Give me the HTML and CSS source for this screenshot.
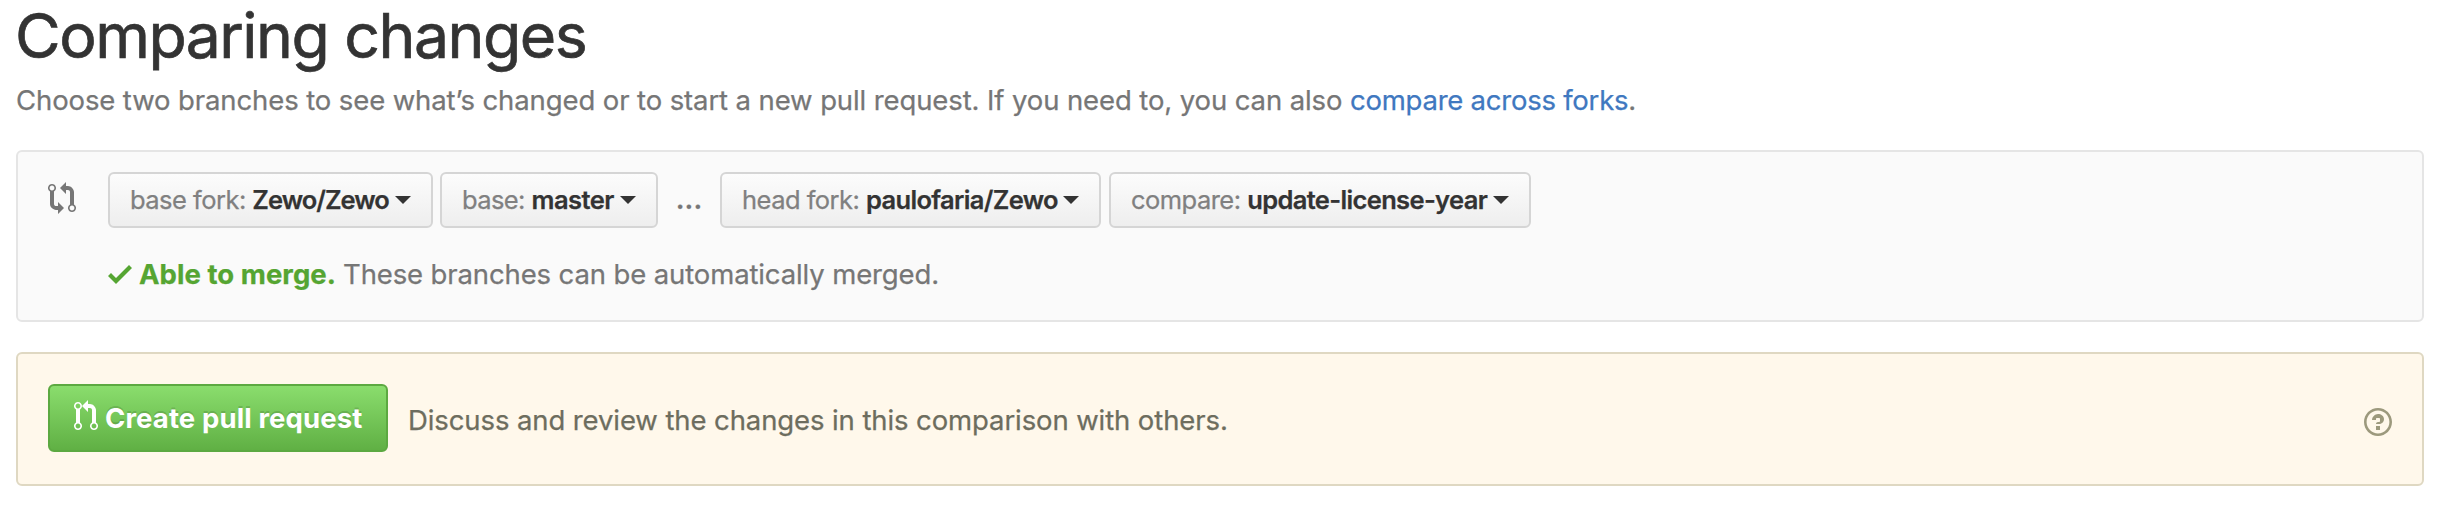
FILE: index.html
```html
<!DOCTYPE html>
<html lang="en">
<head>
<meta charset="utf-8">
<title>Comparing changes</title>
<link rel="stylesheet" href="styles.css">
</head>
<body>
<main class="page">
  <h1 class="title">Comparing changes</h1>
  <p class="subtitle">Choose two branches to see what’s changed or to start a new pull request. If you need to, you can also <a class="link" href="#">compare across forks</a>.</p>

  <section class="range">
    <svg class="icon-compare" viewBox="0 0 14 16" width="28" height="32"><path d="M5 12H4c-.27-.02-.48-.11-.69-.31-.21-.2-.3-.42-.31-.69V4.72A1.993 1.993 0 0 0 2 1a1.993 1.993 0 0 0-1 3.72V11c.03.78.34 1.47.94 2.06.6.59 1.28.91 2.06.94h1v2l3-3-3-3v2zM2 1.8c.66 0 1.2.55 1.2 1.2 0 .65-.55 1.2-1.2 1.2C1.35 4.2.8 3.65.8 3c0-.65.55-1.2 1.2-1.2zm11 9.48V5c-.03-.78-.34-1.47-.94-2.06-.6-.59-1.28-.91-2.06-.94H9V0L6 3l3 3V4h1c.27.02.48.11.69.31.21.2.3.42.31.69v6.28A1.993 1.993 0 0 0 12 15a1.993 1.993 0 0 0 1-3.72zm-1 2.92c-.66 0-1.2-.55-1.2-1.2 0-.65.55-1.2 1.2-1.2.65 0 1.2.55 1.2 1.2 0 .65-.55 1.2-1.2 1.2z"/></svg>
    <div class="range-body">
      <div class="selectors">
        <button class="select base-fork"><span class="label">base fork: </span><strong>Zewo/Zewo</strong><i class="caret"></i></button>
        <button class="select base"><span class="label">base: </span><strong>master</strong><i class="caret"></i></button>
        <span class="dots">...</span>
        <button class="select head-fork"><span class="label">head fork: </span><strong>paulofaria/Zewo</strong><i class="caret"></i></button>
        <button class="select compare"><span class="label">compare: </span><strong>update-license-year</strong><i class="caret"></i></button>
      </div>
      <div class="merge">
        <svg class="icon-check" viewBox="0 0 12 16" width="24" height="32"><path d="M12 5l-8 8-4-4 1.5-1.5L4 10l6.5-6.5z"/></svg>
        <strong class="able">Able to merge.</strong>
        <span class="these">These branches can be automatically merged.</span>
      </div>
    </div>
  </section>

  <section class="prompt">
    <button class="create">
      <svg class="icon-pr" viewBox="0 0 12 16" width="24" height="32"><path d="M11 11.28V5c-.03-.78-.34-1.47-.94-2.06C9.46 2.35 8.78 2.03 8 2H7V0L4 3l3 3V4h1c.27.02.48.11.69.31.21.2.3.42.31.69v6.28A1.993 1.993 0 0 0 10 15a1.993 1.993 0 0 0 1-3.72zm-1 2.92c-.66 0-1.2-.55-1.2-1.2 0-.65.55-1.2 1.2-1.2.65 0 1.2.55 1.2 1.2 0 .65-.55 1.2-1.2 1.2zM4 3c0-1.11-.89-2-2-2a1.993 1.993 0 0 0-1 3.72v6.56A1.993 1.993 0 0 0 2 15a1.993 1.993 0 0 0 1-3.72V4.72c.59-.34 1-.98 1-1.72zm-.8 10c0 .66-.55 1.2-1.2 1.2-.65 0-1.2-.55-1.2-1.2 0-.65.55-1.2 1.2-1.2.65 0 1.2.55 1.2 1.2zM2 4.2C1.34 4.2.8 3.65.8 3c0-.65.55-1.2 1.2-1.2.65 0 1.2.55 1.2 1.2 0 .65-.55 1.2-1.2 1.2z"/></svg>
      <span>Create pull request</span>
    </button>
    <span class="discuss">Discuss and review the changes in this comparison with others.</span>
    <svg class="icon-help" viewBox="0 0 14 16" width="28" height="32"><path d="M6 10h2v2H6v-2zm4-3.5C10 8.64 8 9 8 9H6c0-.55.45-1 1-1h.5c.28 0 .5-.22.5-.5v-1c0-.28-.22-.5-.5-.5h-1c-.28 0-.5.22-.5.5V7H4c0-1.5 1.5-3 3-3s3 1 3 2.5zM7 2.3c3.14 0 5.7 2.56 5.7 5.7s-2.56 5.7-5.7 5.7A5.71 5.71 0 0 1 1.3 8c0-3.14 2.56-5.7 5.7-5.7zM7 1C3.14 1 0 4.14 0 8s3.14 7 7 7 7-3.14 7-7-3.14-7-7-7z"/></svg>
  </section>
</main>
</body>
</html>
```
FILE: styles.css
```css
* { box-sizing: border-box; }
body { margin: 0; background: #fff; font-family: Inter, "Liberation Sans", sans-serif; font-size: 27.5px; font-weight: 400; color: #767676; -webkit-text-stroke: 0.25px; }
.page { width: 2446px; height: 506px; padding: 0 22px 0 16px; }
.title { height: 76px; margin: -3px 0 3px -1px; font-size: 62.5px; font-weight: 400; line-height: 76px; letter-spacing: -1.5px; color: #333; white-space: pre; -webkit-text-stroke: 0.7px; }
.subtitle { margin: 0; height: 74px; line-height: 48px; letter-spacing: -0.108px; white-space: pre; }
.link { color: #4078c0; text-decoration: none; letter-spacing: -0.24px; }
.range { display: flex; height: 172px; padding: 20px 30px; border: 2px solid #e5e5e5; border-radius: 6px; background: #fafafa; }
.icon-compare { margin: 10px 32px 0 0; fill: #767676; flex: none; }
.selectors { display: flex; height: 56px; }
.select { display: flex; align-items: center; height: 56px; padding: 0 20px; border: 2px solid #d5d5d5; border-radius: 6px; background: linear-gradient(#fcfcfc, #eee); font: 400 25.5px/52px Inter, "Liberation Sans", sans-serif; color: #333; white-space: pre; }
.label { color: #808080; letter-spacing: -0.53px; }
.select strong { font-weight: 600; }
.caret { margin-left: auto; border: 8px solid transparent; border-top-color: #333; border-bottom: 0; }
.base-fork { width: 325px; margin-right: 7px; }
.base-fork strong { letter-spacing: -0.99px; }
.base { width: 218px; }
.base .label { letter-spacing: -0.6px; }
.base strong { letter-spacing: -0.513px; }
.dots { width: 62px; text-align: center; line-height: 54px; font-weight: 600; }
.head-fork { width: 381px; margin-right: 8px; }
.head-fork strong { letter-spacing: -0.662px; }
.compare { width: 422px; }
.compare strong { letter-spacing: -0.645px; }
.merge { display: flex; align-items: center; margin-top: 26px; height: 40px; line-height: 40px; white-space: pre; }
.icon-check { margin-right: 7px; fill: #55a532; }
.able { margin-right: 7px; font-weight: 700; letter-spacing: 0.047px; color: #55a532; }
.these { letter-spacing: -0.124px; }
.prompt { display: flex; height: 134px; margin-top: 30px; padding: 30px; border: 2px solid #dfd8c2; border-radius: 6px; background: #fff8eb; white-space: pre; }
.create { display: flex; align-items: center; width: 340px; height: 68px; padding: 0 0 0 24px; border: 2px solid #5ca941; border-radius: 6px; background: linear-gradient(#8add6d, #60b044); color: #fff; font: 700 27.5px/40px Inter, "Liberation Sans", sans-serif; letter-spacing: 0.117px; text-shadow: 0 -2px 0 rgba(0, 0, 0, .15); -webkit-text-stroke: 0; }
.icon-pr { margin-right: 7px; margin-bottom: 4px; fill: #fff; flex: none; }
.discuss { margin-left: 20px; line-height: 72px; letter-spacing: -0.1px; color: #6d6d5e; }
.icon-help { margin: 22px 0 0 auto; fill: #9c997d; }
```
